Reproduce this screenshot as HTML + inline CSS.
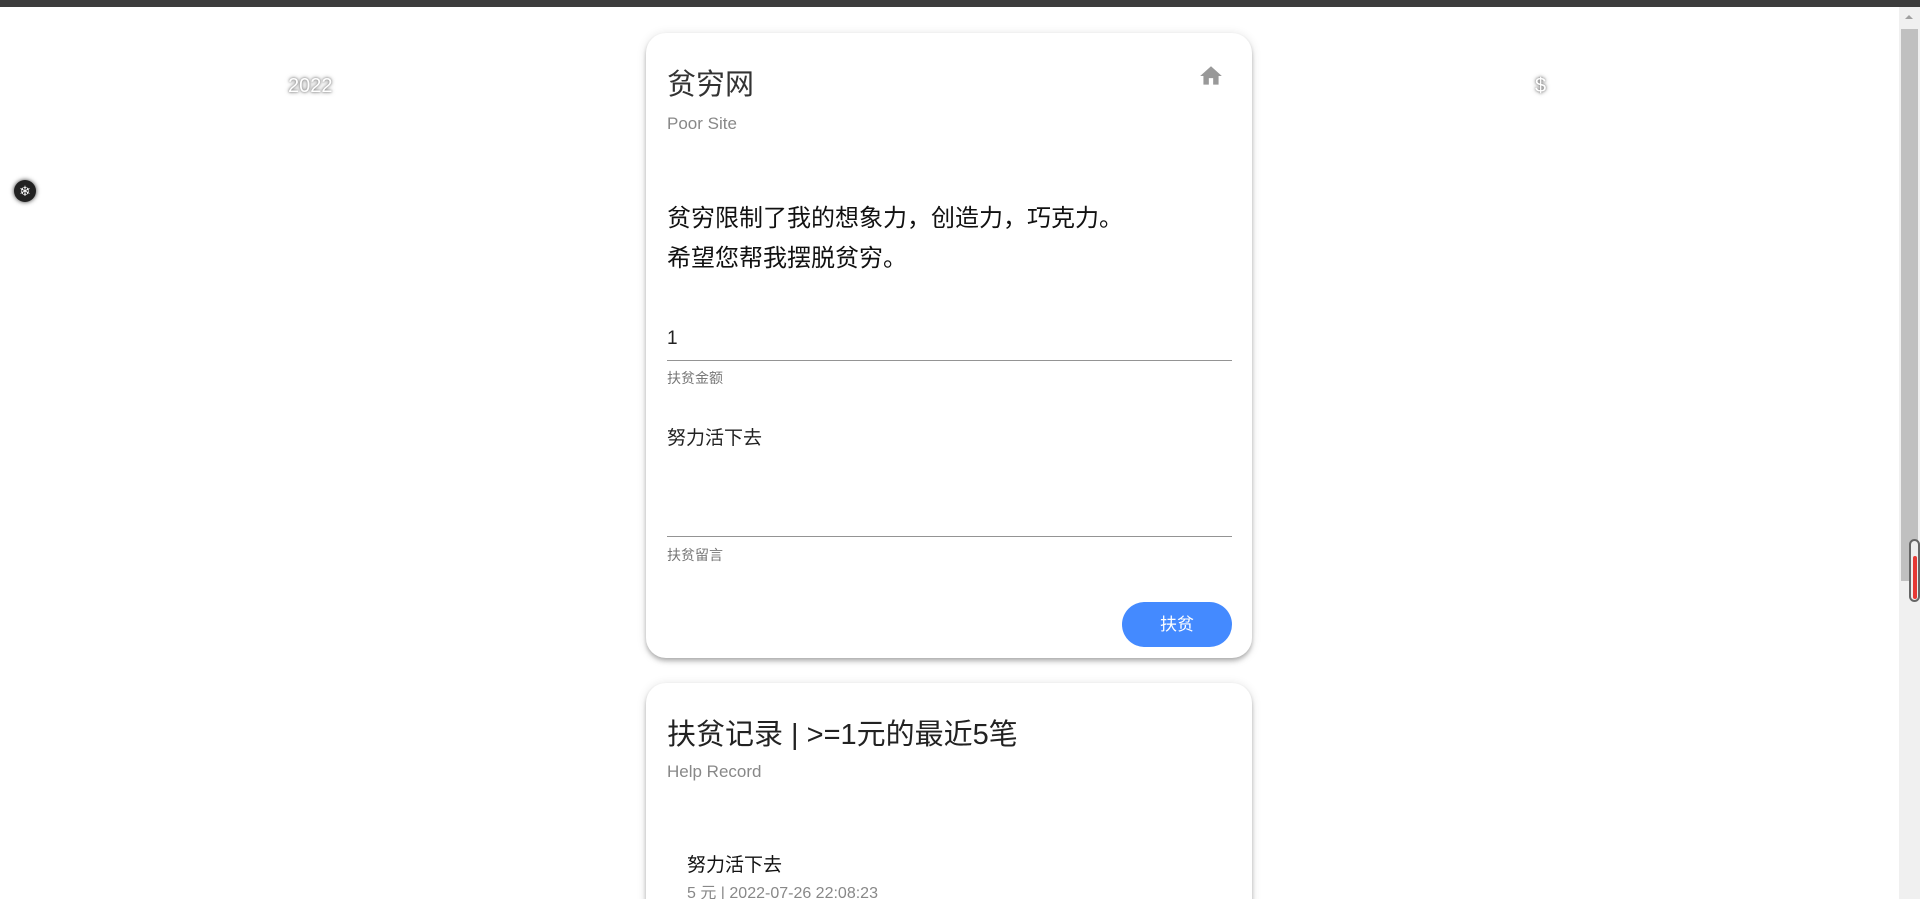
<!DOCTYPE html>
<html><head><meta charset="utf-8"><style>
*{margin:0;padding:0;box-sizing:border-box}
html,body{width:1920px;height:899px;overflow:hidden;background:#fff;font-family:"Liberation Sans","Noto Sans CJK SC",sans-serif}
.wrap{position:relative;width:1920px;height:899px;overflow:hidden}
.topbar{position:absolute;left:0;top:0;width:1920px;height:7px;background:#3c3c3c}
.card{position:absolute;left:646px;width:606px;background:#fff;border-radius:20px;box-shadow:0 2px 4px -1px rgba(0,0,0,.2),0 4px 5px 0 rgba(0,0,0,.14),0 1px 10px 0 rgba(0,0,0,.12)}
.t{position:absolute;white-space:nowrap;line-height:1}
.line{position:absolute;left:21px;width:565px;height:1px;background:#949494}
.sb{position:absolute;left:1899px;top:7px;width:21px;height:892px;background:#f0f0f0}
</style></head><body><div class="wrap">
<div class="topbar"></div>

<div class="t" style="left:288px;top:76px;font-size:20px;color:#fff;text-shadow:0 0 4px #777,0 0 2px #888">2022</div>
<div class="t" style="left:1535px;top:76px;font-size:20px;color:#fff;text-shadow:0 0 4px #777,0 0 2px #888">$</div>
<div style="position:absolute;left:14px;top:180px;width:22px;height:22px;border-radius:50%;background:#222;box-shadow:0 0 5px #333;color:#fff;font-size:14px;line-height:22px;text-align:center">❄</div>

<div class="card" style="top:33px;height:625px">
  <div class="t" style="left:21px;top:38px;font-size:29px;color:#333">贫穷网</div>
  <div class="t" style="left:21px;top:82px;font-size:17px;color:#888">Poor Site</div>
  <svg style="position:absolute;left:552px;top:30px" width="26" height="26" viewBox="0 0 24 24"><path d="M10 20v-6h4v6h5v-8h3L12 3 2 12h3v8z" fill="#999"/></svg>
  <div class="t" style="left:21px;top:166px;font-size:24px;color:#111;line-height:40px">贫穷限制了我的想象力，创造力，巧克力。<br>希望您帮我摆脱贫穷。</div>
  <div class="t" style="left:21px;top:296px;font-size:19px;color:#222">1</div>
  <div class="line" style="top:327px"></div>
  <div class="t" style="left:21px;top:338px;font-size:14px;color:#777">扶贫金额</div>
  <div class="t" style="left:21px;top:396px;font-size:19px;color:#222">努力活下去</div>
  <div class="line" style="top:503px"></div>
  <div class="t" style="left:21px;top:515px;font-size:14px;color:#777">扶贫留言</div>
  <div style="position:absolute;left:476px;top:569px;width:110px;height:45px;border-radius:23px;background:#448aff;color:#fff;font-size:17px;line-height:45px;text-align:center">扶贫</div>
</div>

<div class="card" style="top:683px;height:260px">
  <div class="t" style="left:21px;top:38px;font-size:29px;color:#222">扶贫记录 | &gt;=1元的最近5笔</div>
  <div class="t" style="left:21px;top:80px;font-size:17px;color:#888">Help Record</div>
  <div class="t" style="left:41px;top:173px;font-size:19px;color:#111">努力活下去</div>
  <div class="t" style="left:41px;top:203px;font-size:16px;color:#888">5 元 | 2022-07-26 22:08:23</div>
</div>

<div class="sb">
  <div style="position:absolute;left:6px;top:8px;width:0;height:0;border-left:4px solid transparent;border-right:4px solid transparent;border-bottom:4px solid #a0a0a0"></div>
  <div style="position:absolute;left:2px;top:22px;width:17px;height:552px;background:#c0c0c0"></div>
  <div style="position:absolute;left:10px;top:532px;width:11px;height:63px;border:2px solid #666;border-radius:6px;background:#eee"></div>
  <div style="position:absolute;left:14px;top:549px;width:4px;height:43px;background:#e53935;border-radius:2px"></div>
</div>
</div></body></html>
